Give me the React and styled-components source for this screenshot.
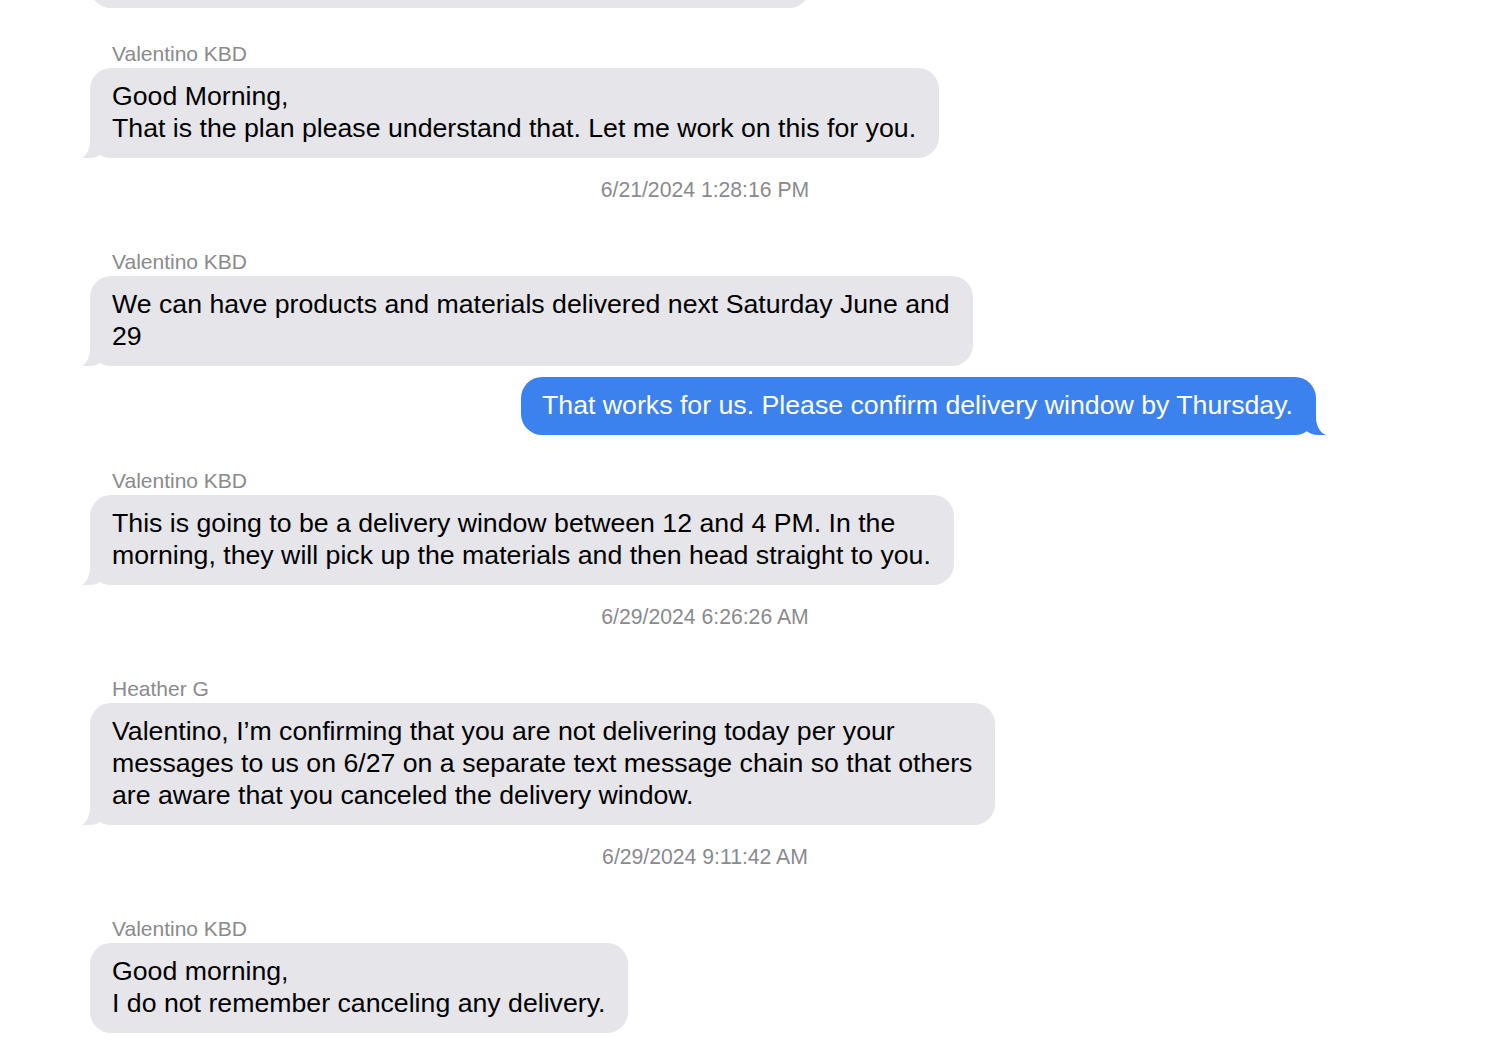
import React from "react";
import styled, { createGlobalStyle } from "styled-components";

const GlobalStyle = createGlobalStyle`
  html, body {
    margin: 0;
    padding: 0;
    background: #ffffff;
    overflow: hidden;
  }
  body {
    font-family: "Liberation Sans", Arial, Helvetica, sans-serif;
    -webkit-font-smoothing: antialiased;
  }
`;

const GRAY = "#e5e5ea";
const BLUE = "#3b82ef";

const Page = styled.div`
  width: 1499px;
  height: 1060px;
  overflow: hidden;
`;

const Feed = styled.div`
  width: 1230px;
  margin-top: -52px;
  padding-left: 90px;
  display: flex;
  flex-direction: column;
`;

const Group = styled.div`
  display: flex;
  flex-direction: column;
  align-items: ${(p) => (p.$mine ? "flex-end" : "flex-start")};
  margin-top: ${(p) => (p.$first ? "0" : p.$tight ? "11px" : "34px")};
`;

const Sender = styled.div`
  padding-left: 22px;
  margin-bottom: 2px;
  font-size: 21px;
  line-height: 24px;
  color: #8a8a8e;
`;

const Bubble = styled.div`
  position: relative;
  box-sizing: border-box;
  width: ${(p) => (p.$width ? `${p.$width}px` : "auto")};
  min-height: ${(p) => (p.$width ? "60px" : "0")};
  margin-right: ${(p) => (p.$mine ? "4px" : "0")};
  padding: 12px 23px 14px ${(p) => (p.$mine ? "21px" : "22px")};
  border-radius: 21px;
  background: ${(p) => (p.$mine ? BLUE : GRAY)};
  color: ${(p) => (p.$mine ? "#ffffff" : "#000000")};
  font-size: 26.7px;
  line-height: 32px;
  white-space: pre;

  ${(p) =>
    p.$tail &&
    `
    &::before {
      content: "";
      position: absolute;
      bottom: 0;
      ${p.$mine ? "right" : "left"}: ${p.$mine ? "-10px" : "-8px"};
      width: 24px;
      height: 22px;
      background: ${p.$mine ? BLUE : GRAY};
      border-bottom-${p.$mine ? "left" : "right"}-radius: 16px 14px;
    }
    &::after {
      content: "";
      position: absolute;
      bottom: 0;
      ${p.$mine ? "right" : "left"}: ${p.$mine ? "-12px" : "-10px"};
      width: ${p.$mine ? "12px" : "10px"};
      height: 22px;
      background: #ffffff;
      border-bottom-${p.$mine ? "left" : "right"}-radius: ${p.$mine ? "12px" : "10px"} 18px;
    }
  `}
`;

const Stamp = styled.div`
  padding: 20px 0 14px;
  text-align: center;
  font-size: 21.2px;
  line-height: 24px;
  color: #8a8a8e;
`;

const messages = [
  { id: 0, clipped: true, width: 720 },
  {
    id: 1,
    from: "Valentino KBD",
    text: "Good Morning,\nThat is the plan please understand that. Let me work on this for you.",
    time: "6/21/2024 1:28:16 PM",
  },
  {
    id: 2,
    from: "Valentino KBD",
    text: "We can have products and materials delivered next Saturday June and\n29",
  },
  {
    id: 3,
    mine: true,
    text: "That works for us. Please confirm delivery window by Thursday.",
  },
  {
    id: 4,
    from: "Valentino KBD",
    text: "This is going to be a delivery window between 12 and 4 PM. In the\nmorning, they will pick up the materials and then head straight to you.",
    time: "6/29/2024 6:26:26 AM",
  },
  {
    id: 5,
    from: "Heather G",
    text: "Valentino, I\u2019m confirming that you are not delivering today per your\nmessages to us on 6/27 on a separate text message chain so that others\nare aware that you canceled the delivery window.",
    time: "6/29/2024 9:11:42 AM",
  },
  {
    id: 6,
    from: "Valentino KBD",
    text: "Good morning,\nI do not remember canceling any delivery.",
    noTail: true,
  },
];

const Message = ({ msg, prev }) => {
  if (msg.clipped)
    return (
      <Group $first>
        <Bubble $width={msg.width} />
      </Group>
    );

  return (
    <>
      <Group $mine={msg.mine} $tight={msg.mine && prev && !prev.mine}>
        {msg.from && <Sender>{msg.from}</Sender>}
        <Bubble $mine={msg.mine} $tail={!msg.noTail}>
          {msg.text}
        </Bubble>
      </Group>
      {msg.time && <Stamp>{msg.time}</Stamp>}
    </>
  );
};

const App = () => {
  return (
    <Page>
      <GlobalStyle />
      <Feed>
        {messages.map((m, i) => (
          <Message key={m.id} msg={m} prev={messages[i - 1]} />
        ))}
      </Feed>
    </Page>
  );
};

export default App;
